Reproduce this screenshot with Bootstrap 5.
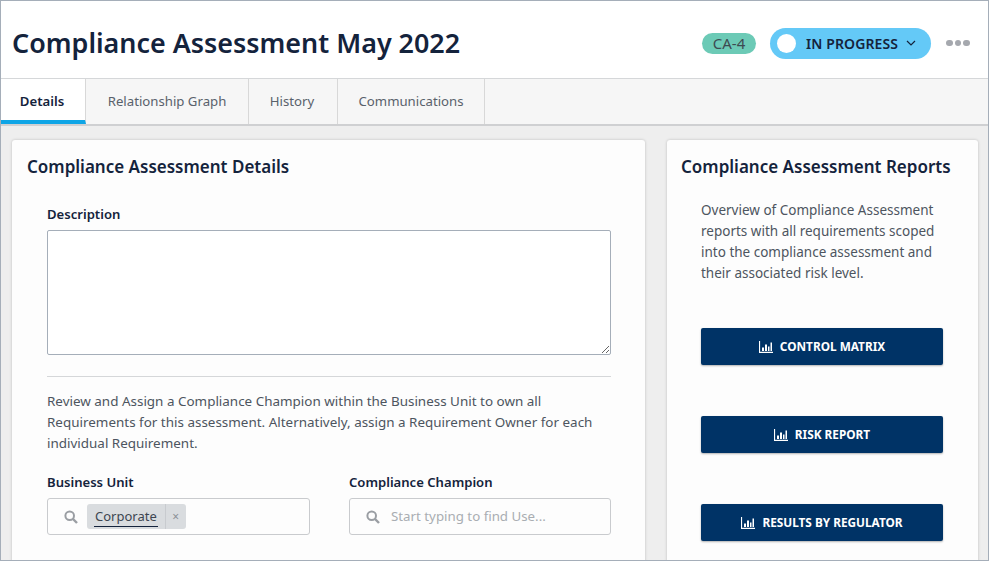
<!DOCTYPE html>
<html lang="en">
<head>
<meta charset="utf-8">
<title>Compliance Assessment May 2022</title>
<link href="https://cdn.jsdelivr.net/npm/bootstrap@5.3.0/dist/css/bootstrap.min.css" rel="stylesheet">
<style>
html,body{height:100%;margin:0;overflow:hidden}
body{font-family:"Noto Sans","Open Sans",sans-serif;color:#14233c;background:#eee}
.shell{height:561px;border:1px solid #a5aeb9;display:flex;flex-direction:column;overflow:hidden;background:#eee}
.head{height:78px;background:#fff;border-bottom:1px solid #d5d7d9;padding:7px 18px 0 11px;flex:none}
.head h1{font-size:26.9px;font-weight:600;margin:0;color:#14233c}
.idpill{background:#6ccab6;color:#3d4a52;font-size:15px;border-radius:11px;height:21px;line-height:21px;width:54px;text-align:center;margin-right:14px}
.statuspill{background:#64c9f7;height:31px;border-radius:16px;padding:0 15px 0 7px;font-size:14px;font-weight:600;color:#14233c;margin-right:15px;border:0;letter-spacing:.1px}
.statusdot{width:19px;height:19px;background:#fff;border-radius:50%;margin-right:10px}
.dots{gap:2px}
.dots i{display:block;width:6.67px;height:6.67px;border-radius:50%;background:#a5a8ae}
.tabbar{height:47px;background:#f6f6f6;border-bottom:2px solid #cfd0d2;flex:none;display:flex;margin:0;padding:0;list-style:none}
.tabbar li{font-size:13.2px;color:#59616b;border-right:1px solid #d8d8d8;display:flex;align-items:center;justify-content:center;height:45px}
.tabbar li.on{background:#fff;color:#14233c;font-weight:600;width:85px;border-bottom:4px solid #0ea5e6;padding-top:4px;padding-right:2px}
.tabbar .t2{width:163px}.tabbar .t3{width:89px;padding-right:2px}.tabbar .t4{width:147px}
.work{display:flex;gap:22px;padding:14px 10px 0 11px;flex:1;min-height:0}
.panel{background:#fdfdfd;border-radius:3px;box-shadow:0 0 3px rgba(0,0,0,.22);flex:none;height:500px}
.pleft{width:633px;padding:15px}
.pright{width:311px;padding:15px 15px 15px 14px}
.panel h2{font-size:17px;font-weight:600;margin:0;color:#14233c;line-height:24px}
.fieldlabel{font-size:13.1px;font-weight:600;color:#14233c;line-height:18px;display:block;margin:0}
.toplabel{margin-top:26px}
.desc{display:block;width:564px;height:125px;border:1px solid #a5aeb9;border-radius:2px;margin-top:7px;padding:6px;resize:vertical;box-shadow:none;background:#fff}
.inner{padding:0 19px 0 20px}
.rule{border:0;border-top:1px solid #d5d7d9;margin:21px 0 14px;opacity:1;width:564px}
.note{font-size:13.45px;line-height:21px;color:#4d5560;margin:0}
.lookup{height:37px;border:1px solid #c9cbce;border-radius:3px;margin-top:7px;padding:0 0 0 16px;font-size:13.3px}
.lookup svg{flex:none}
.chip{background:#d9dcdf;border-radius:3px;height:25px;margin-left:9px;display:flex;align-items:center;color:#3d4651;font-size:13px}
.chipname{padding:0 8px;border-right:1px solid #c8cbcf;height:25px;line-height:24px;position:relative}
.chipname::after{content:"";position:absolute;left:7px;right:7px;bottom:2px;border-bottom:1px solid #14233c}
.chipx{width:20px;text-align:center;color:#8b9097;font-size:12px}
.ph{color:#a9adb2;margin-left:11px}
.blurb{font-size:13.5px;line-height:21px;color:#4d5560;margin:21px 0 0 20px;width:240px}
.rbtn{display:flex;align-items:center;justify-content:center;gap:7px;width:242px;height:37px;margin-left:20px;background:#003366;color:#fff;font-size:11.8px;font-weight:700;border:0;border-radius:2px;box-shadow:0 1px 2px rgba(0,0,0,.3);padding:0}
.rbtn:hover{background:#003366;color:#fff}
.first{margin-top:44px}.next{margin-top:51px}
.fieldrow{gap:39px;margin-top:19px}
.colL{width:263px}.colR{width:262px}
</style>
</head>
<body>
<div class="shell">
  <header class="head d-flex align-items-center">
    <h1 class="flex-grow-1">Compliance Assessment May 2022</h1>
    <span class="idpill">CA-4</span>
    <button type="button" class="statuspill d-flex align-items-center">
      <span class="statusdot"></span>IN PROGRESS
      <svg class="ms-2" width="10" height="6" viewBox="0 0 10 6"><path d="M1 1l4 4 4-4" fill="none" stroke="#14233c" stroke-width="1.2"/></svg>
    </button>
    <span class="dots d-flex"><i></i><i></i><i></i></span>
  </header>
  <ul class="tabbar">
    <li class="on">Details</li>
    <li class="t2">Relationship Graph</li>
    <li class="t3">History</li>
    <li class="t4">Communications</li>
  </ul>
  <main class="work">
    <section class="panel pleft">
      <h2>Compliance Assessment Details</h2>
      <div class="inner">
        <label class="fieldlabel toplabel">Description</label>
        <textarea class="desc" aria-label="Description"></textarea>
        <hr class="rule">
        <p class="note">Review and Assign a Compliance Champion within the Business Unit to own all Requirements for this assessment. Alternatively, assign a Requirement Owner for each individual Requirement.</p>
        <div class="d-flex fieldrow">
          <div class="colL">
            <span class="fieldlabel">Business Unit</span>
            <div class="lookup d-flex align-items-center">
              <svg width="14" height="14" viewBox="0 0 14 14"><circle cx="5.700" cy="5.700" r="4.300" fill="none" stroke="#9a9ea3" stroke-width="2"/><path d="M9 9l4 4" stroke="#9a9ea3" stroke-width="2.400"/></svg>
              <span class="chip"><span class="chipname">Corporate</span><span class="chipx">×</span></span>
            </div>
          </div>
          <div class="colR">
            <span class="fieldlabel">Compliance Champion</span>
            <div class="lookup d-flex align-items-center">
              <svg width="14" height="14" viewBox="0 0 14 14"><circle cx="5.700" cy="5.700" r="4.300" fill="none" stroke="#9a9ea3" stroke-width="2"/><path d="M9 9l4 4" stroke="#9a9ea3" stroke-width="2.400"/></svg>
              <span class="ph">Start typing to find Use...</span>
            </div>
          </div>
        </div>
      </div>
    </section>
    <aside class="panel pright">
      <h2>Compliance Assessment Reports</h2>
      <p class="blurb">Overview of Compliance Assessment reports with all requirements scoped into the compliance assessment and their associated risk level.</p>
      <button type="button" class="rbtn first"><svg width="14" height="12" viewBox="0 0 14 12"><path d="M.5 0v11.300H14" fill="none" stroke="#fff" stroke-width="1.200"/><path d="M3 6.500h2V10H3zM6 3.500h2V10H6zM9 5.500h1.500V10H9zM11.500 1.500H13V10h-1.500z" fill="#fff"/></svg>CONTROL MATRIX</button>
      <button type="button" class="rbtn next"><svg width="14" height="12" viewBox="0 0 14 12"><path d="M.5 0v11.300H14" fill="none" stroke="#fff" stroke-width="1.200"/><path d="M3 6.500h2V10H3zM6 3.500h2V10H6zM9 5.500h1.500V10H9zM11.500 1.500H13V10h-1.500z" fill="#fff"/></svg>RISK REPORT</button>
      <button type="button" class="rbtn next"><svg width="14" height="12" viewBox="0 0 14 12"><path d="M.5 0v11.300H14" fill="none" stroke="#fff" stroke-width="1.200"/><path d="M3 6.500h2V10H3zM6 3.500h2V10H6zM9 5.500h1.500V10H9zM11.500 1.500H13V10h-1.500z" fill="#fff"/></svg>RESULTS BY REGULATOR</button>
    </aside>
  </main>
</div>
</body>
</html>
